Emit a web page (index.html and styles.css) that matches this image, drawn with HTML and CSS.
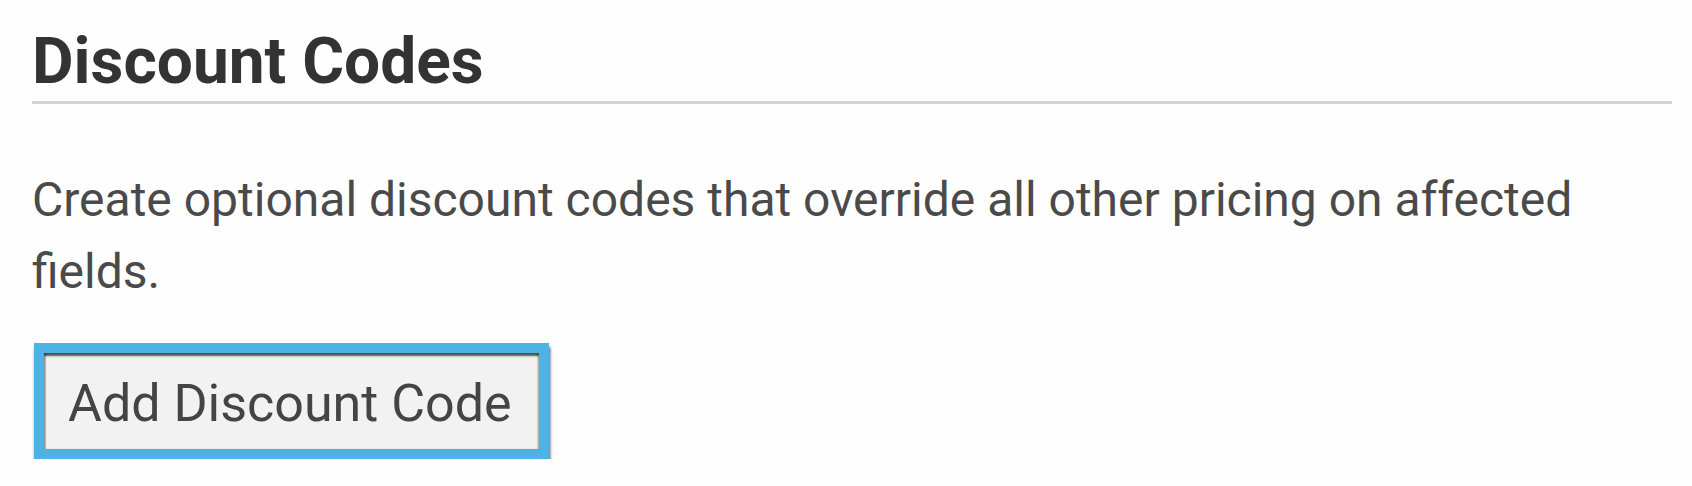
FILE: index.html
```html
<!DOCTYPE html>
<html lang="en">
<head>
    <meta charset="UTF-8">
    <title>Discount Codes</title>
    <link rel="stylesheet" href="styles.css">
</head>
<body>
    <div class="panel">
        <h2 class="panel-title">Discount Codes</h2>
        <p class="panel-text">Create optional discount codes that override all other pricing on affected fields.</p>
        <button class="add-btn" type="button">Add Discount Code</button>
    </div>
</body>
</html>
```

FILE: styles.css
```css
* {
    margin: 0;
    padding: 0;
    box-sizing: border-box;
}

body {
    font-family: Roboto, 'Liberation Sans', sans-serif;
    background: #fefefe;
}

.panel {
    width: 1672px;
    padding: 24px 0 0 32px;
}

.panel-title {
    font-size: 64px;
    font-weight: 700;
    line-height: 76px;
    color: #333;
    padding-bottom: 1px;
    border-bottom: 3px solid #d3d3d3;
}

.panel-text {
    margin-top: 60px;
    font-size: 48px;
    line-height: 72px;
    color: #4a4a4a;
}

.add-btn {
    display: block;
    margin-top: 35px;
    margin-left: 2px;
    width: 515px;
    height: 116px;
    border: 10px solid #4db3e4;
    background: #f2f2f2;
    box-shadow: inset 0 3px 2px rgba(0,0,0,0.65),
                inset 2px 0 1px rgba(0,0,0,0.25),
                inset -2px 0 1px rgba(0,0,0,0.12),
                1px 4px 3px rgba(0,0,0,0.7);
    font-family: inherit;
    font-size: 52px;
    color: #444;
    text-align: left;
    padding: 4px 0 0 24px;
    cursor: pointer;
}
```
